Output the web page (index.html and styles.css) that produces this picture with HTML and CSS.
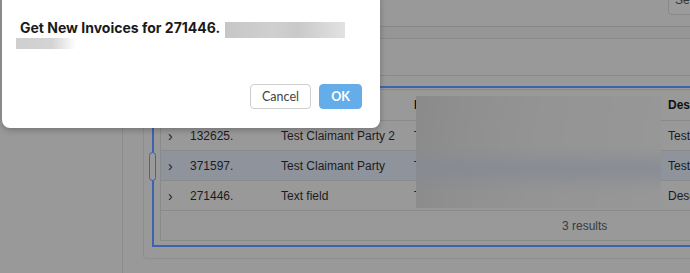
FILE: index.html
```html
<!DOCTYPE html>
<html lang="en">
<head>
  <meta charset="UTF-8">
  <meta name="viewport" content="width=device-width, initial-scale=1">
  <title>Invoices</title>
  <link rel="stylesheet" href="styles.css">
</head>
<body>

  <div class="app">
    <aside class="sidebar"></aside>

    <main class="main">
      <div class="topbar">
        <button class="search-btn">Search</button>
      </div>
      <div class="band"></div>
      <div class="tabs"></div>

      <section class="panel">
        <div class="focus-box">
          <span class="scroll-handle"></span>
          <table class="grid">
            <thead>
              <tr>
                <th class="col-exp"></th>
                <th class="col-id">ID</th>
                <th class="col-name">Claimant</th>
                <th class="col-hidden">Reference</th>
                <th class="col-desc">Description</th>
              </tr>
            </thead>
            <tbody>
              <tr>
                <td class="col-exp">&rsaquo;</td>
                <td>132625.</td>
                <td>Test Claimant Party 2</td>
                <td>T</td>
                <td>Test</td>
              </tr>
              <tr class="selected">
                <td class="col-exp">&rsaquo;</td>
                <td>371597.</td>
                <td>Test Claimant Party</td>
                <td>T</td>
                <td>Test</td>
              </tr>
              <tr>
                <td class="col-exp">&rsaquo;</td>
                <td>271446.</td>
                <td>Text field</td>
                <td>T</td>
                <td>Description</td>
              </tr>
            </tbody>
            <tfoot>
              <tr>
                <td colspan="5" class="results">3 results</td>
              </tr>
            </tfoot>
          </table>
          <!-- скрытые данные -->
          <div class="blur-block"></div>
        </div>
      </section>
    </main>
  </div>

  <!-- Диалог подтверждения -->
  <div class="modal">
    <h2 class="modal-title">Get New Invoices for 271446. <span class="redact"></span></h2>
    <div class="redact-line"></div>
    <div class="modal-actions">
      <button class="btn btn-cancel">Cancel</button>
      <button class="btn btn-ok">OK</button>
    </div>
  </div>

</body>
</html>
```

FILE: styles.css
```css
/* Страница под затемнением */
body {
  margin: 0;
  padding: 0;
  font-family: 'Liberation Sans', Arial, sans-serif;
  background: #999999;
  color: #1c1c1c;
  overflow: hidden;
}

.app {
  display: flex;
  height: 273px;
}

.sidebar {
  width: 122px;
  flex-shrink: 0;
  border-right: 1px solid #8c8c8c;
}

.main {
  flex: 1;
  overflow: hidden;
}

/* Верхняя панель */
.topbar {
  height: 26px;
  border-bottom: 1px solid #888;
  display: flex;
  justify-content: flex-end;
  align-items: flex-end;
}

.search-btn {
  margin: 0 -40px 11px 0;
  height: 26px;
  width: 62px;
  border: 1px solid #888;
  border-radius: 4px;
  background: #9b9b9b;
  color: #333;
  font-family: 'Liberation Sans', Arial, sans-serif;
  font-size: 12px;
  line-height: 12px;
  text-align: left;
  padding: 4px 0 0 6px;
  display: flex;
  align-items: flex-start;
}

.band {
  height: 11px;
  border-bottom: 1px solid #8a8a8a;
  background: #969696;
}

.tabs {
  height: 36px;
  border-bottom: 1px solid #8a8a8a;
}

/* Панель с таблицей */
.panel {
  margin-left: 20px;
  padding: 10px 0 11px 8px;
  border: 1px solid #8e8e8e;
  border-top: none;
  border-right: none;
  border-radius: 0 0 0 4px;
  width: 620px;
}

.focus-box {
  position: relative;
  border: 2px solid #3d63b0;
  border-right: none;
  padding: 1px 0 4px 6px;
}

.scroll-handle {
  position: absolute;
  left: -5px;
  top: 64px;
  width: 5px;
  height: 27px;
  border: 1px solid #3d63b0;
  border-radius: 4px;
  background: #9a9a9a;
}

.grid {
  width: 620px;
  border-collapse: collapse;
  border: 1px solid #8a8a8a;
  border-right: none;
  table-layout: fixed;
  font-size: 12px;
}

.grid th,
.grid td {
  padding: 0 9px;
  text-align: left;
  white-space: nowrap;
  overflow: hidden;
}

.grid th {
  height: 30px;
  font-weight: 700;
  color: #111;
  border-bottom: 1px solid #8a8a8a;
}

.grid td {
  height: 29px;
  border-bottom: 1px solid #8a8a8a;
}

.grid .col-exp {
  width: 13px;
  padding: 0 0 0 7px;
  font-size: 14px;
}

.col-id { width: 73px; }
.col-name { width: 115px; }
.col-hidden { width: 236px; }

.grid tr.selected td {
  background: #8e939c;
}

.grid .results {
  height: 29px;
  text-align: left;
  padding-left: 401px;
  color: #3a3a3a;
  border-bottom: 1px solid #8a8a8a;
}

/* Размытый блок поверх скрытых колонок */
.blur-block {
  position: absolute;
  left: 262px;
  top: 8px;
  width: 245px;
  height: 112px;
  overflow: hidden;
}

.blur-block::before {
  content: "";
  position: absolute;
  inset: -12px;
  background:
    linear-gradient(180deg, rgba(148, 148, 148, 0) 48%, rgba(134, 138, 148, 0.95) 62%, rgba(148, 148, 148, 0) 78%),
    linear-gradient(100deg, #898989 0%, #8f8f8f 22%, #949494 50%, #969696 80%, #989898 100%);
  filter: blur(6px);
}

/* Модальное окно */
.modal {
  position: absolute;
  left: 2px;
  top: -10px;
  width: 378px;
  height: 138px;
  background: #ffffff;
  border-radius: 8px;
  box-shadow: 0 2px 6px rgba(0, 0, 0, 0.25);
  box-sizing: border-box;
  padding: 29px 18px 19px 18px;
  display: flex;
  flex-direction: column;
}

.modal-title {
  margin: 0;
  font-family: 'Inter', 'Roboto', sans-serif;
  font-size: 14px;
  font-weight: 700;
  color: #1a1a1a;
  line-height: 18px;
  white-space: nowrap;
}

.redact {
  display: inline-block;
  vertical-align: -5px;
  width: 120px;
  height: 16px;
  margin-left: 2px;
  background: linear-gradient(90deg, #c6c6c6 0%, #d0d0d0 40%, #c9c9c9 60%, #e2e2e2 100%);
}

.redact-line {
  margin: 0 0 0 -4px;
  width: 60px;
  height: 11px;
  background: linear-gradient(90deg, #cfcfcf 0%, #d4d4d4 60%, #ffffff 100%);
}

.modal-actions {
  margin-top: auto;
  display: flex;
  justify-content: flex-end;
  gap: 8px;
}

.btn {
  height: 25px;
  border-radius: 4px;
  font-family: 'Lato', sans-serif;
  font-size: 12.5px;
  cursor: pointer;
}

.btn-cancel {
  width: 61px;
  background: #fff;
  border: 1px solid #cfcfcf;
  color: #444;
}

.btn-ok {
  width: 43px;
  background: #64ade8;
  border: 1px solid #64ade8;
  color: #fff;
  font-weight: 700;
}
```
